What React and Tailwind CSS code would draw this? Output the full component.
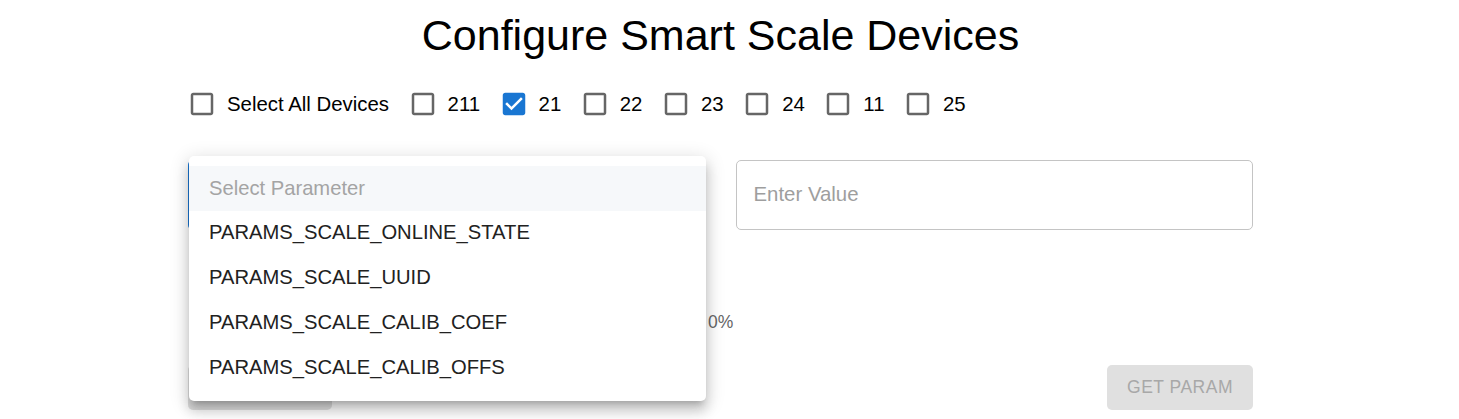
const devices = [
  { id: "211", checked: false },
  { id: "21", checked: true },
  { id: "22", checked: false },
  { id: "23", checked: false },
  { id: "24", checked: false },
  { id: "11", checked: false },
  { id: "25", checked: false },
];

const params = [
  "PARAMS_SCALE_ONLINE_STATE",
  "PARAMS_SCALE_UUID",
  "PARAMS_SCALE_CALIB_COEF",
  "PARAMS_SCALE_CALIB_OFFS",
];

function Box({ checked }) {
  if (checked) {
    return (
      <svg width="30" height="30" viewBox="0 0 24 24" className="shrink-0">
        <path
          fill="#1976d2"
          d="M19 3H5c-1.11 0-2 .9-2 2v14c0 1.1.89 2 2 2h14c1.1 0 2-.89 2-2V5c0-1.1-.9-2-2-2zm-9 14l-5-5 1.41-1.41L10 14.17l7.59-7.59L19 8l-9 9z"
        />
      </svg>
    );
  }
  return (
    <svg width="30" height="30" viewBox="0 0 24 24" className="shrink-0">
      <path
        fill="#666666"
        d="M19 5v14H5V5h14m0-2H5c-1.11 0-2 .9-2 2v14c0 1.1.89 2 2 2h14c1.1 0 2-.9 2-2V5c0-1.1-.9-2-2-2z"
      />
    </svg>
  );
}

function CheckItem({ label, checked }) {
  return (
    <label className="flex items-center">
      <Box checked={checked} />
      <span className="ml-[10px] text-[20.4px] leading-[30px] text-black">{label}</span>
    </label>
  );
}

export default function App() {
  return (
    <div className="flex justify-center pr-[18px] bg-white min-h-[419px] font-['Liberation_Sans',Arial,sans-serif]">
      <div className="relative w-[1065px] pt-[9px]">
        <h1 className="text-center text-[43px] leading-[52px] text-black">
          Configure Smart Scale Devices
        </h1>

        {/* device checkboxes */}
        <div className="mt-[28px] flex items-center gap-[18.5px] -ml-[1px]">
          <CheckItem label="Select All Devices" checked={false} />
          {devices.map((d) => (
            <CheckItem key={d.id} label={d.id} checked={d.checked} />
          ))}
        </div>

        {/* select + value */}
        <div className="mt-[41px] grid grid-cols-2 gap-[30px]">
          <div className="h-[70px] rounded-[5px] border-[2.5px] border-[#1976d2]" />
          <div className="h-[70px] rounded-[5px] border border-[#c4c4c4] flex items-center px-[17px] pb-[2px]">
            <span className="text-[20.4px] text-[#9e9e9e]">Enter Value</span>
          </div>
        </div>

        {/* progress */}
        <div className="mt-[80px] flex items-center gap-[10px] pl-[10px]">
          <div className="w-[500px] h-[5px] rounded bg-[#bbdefb]" />
          <span className="text-[17.5px] leading-[24px] text-[#666666]">0%</span>
        </div>

        {/* actions */}
        <div className="mt-[31px] flex justify-between">
          <button className="h-[45px] px-[20px] rounded-[5px] bg-[#e0e0e0] text-[17.5px] tracking-[0.5px] text-[#a8a8a8] uppercase">
            Set Param
          </button>
          <button className="h-[45px] px-[20px] rounded-[5px] bg-[#e0e0e0] text-[17.5px] tracking-[0.5px] text-[#a8a8a8] uppercase">
            Get Param
          </button>
        </div>

        {/* open select menu */}
        <div className="absolute left-[1px] top-[156px] w-[517px] rounded-[5px] bg-white py-[10px] shadow-[0px_6px_6px_-4px_rgba(0,0,0,0.2),0px_10px_12px_1px_rgba(0,0,0,0.14),0px_4px_18px_3px_rgba(0,0,0,0.12)]">
          <div className="h-[45px] flex items-center px-[20px] pb-[1px] bg-[#f6f8fa] text-[20.2px] text-[#a4a4a4]">
            Select Parameter
          </div>
          {params.map((p) => (
            <div key={p} className="h-[45px] flex items-center px-[20px] pb-[3px] text-[20.2px] text-[#212121]">
              {p}
            </div>
          ))}
        </div>
      </div>
    </div>
  );
}
